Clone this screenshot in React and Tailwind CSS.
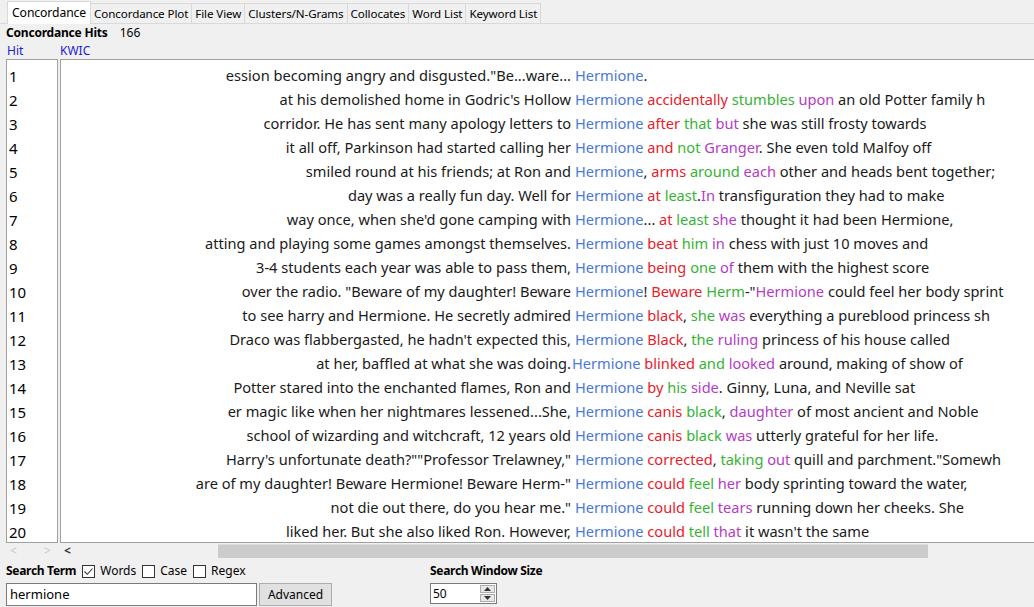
import React from 'react';

const RED = 'text-[#e8202a]';
const GREEN = 'text-[#35b335]';
const PURPLE = 'text-[#b33cc4]';
const BLUE = 'text-[#4a78d6]';

// segments: [text, color] where color is one of k/r/g/p or '' for black
const rows = [
  ['ession becoming angry and disgusted."Be...ware...', [['Hermione', 'k'], ['.', '']]],
  ["at his demolished home in Godric's Hollow", [['Hermione', 'k'], [' '], ['accidentally', 'r'], [' '], ['stumbles', 'g'], [' '], ['upon', 'p'], [' an old Potter family h']]],
  ['corridor. He has sent many apology letters to', [['Hermione', 'k'], [' '], ['after', 'r'], [' '], ['that', 'g'], [' '], ['but', 'p'], [' she was still frosty towards']]],
  ['it all off, Parkinson had started calling her', [['Hermione', 'k'], [' '], ['and', 'r'], [' '], ['not', 'g'], [' '], ['Granger', 'p'], ['. She even told Malfoy off']]],
  ['smiled round at his friends; at Ron and', [['Hermione', 'k'], [', '], ['arms', 'r'], [' '], ['around', 'g'], [' '], ['each', 'p'], [' other and heads bent together;']]],
  ['day was a really fun day. Well for', [['Hermione', 'k'], [' '], ['at', 'r'], [' '], ['least', 'g'], ['.'], ['In', 'p'], [' transfiguration they had to make']]],
  ["way once, when she'd gone camping with", [['Hermione', 'k'], ['... '], ['at', 'r'], [' '], ['least', 'g'], [' '], ['she', 'p'], [' thought it had been Hermione,']]],
  ['atting and playing some games amongst themselves.', [['Hermione', 'k'], [' '], ['beat', 'r'], [' '], ['him', 'g'], [' '], ['in', 'p'], [' chess with just 10 moves and']]],
  ['3-4 students each year was able to pass them,', [['Hermione', 'k'], [' '], ['being', 'r'], [' '], ['one', 'g'], [' '], ['of', 'p'], [' them with the highest score']]],
  ['over the radio. "Beware of my daughter! Beware', [['Hermione', 'k'], ['! '], ['Beware', 'r'], [' '], ['Herm', 'g'], ['-"'], ['Hermione', 'p'], [' could feel her body sprint']]],
  ['to see harry and Hermione. He secretly admired', [['Hermione', 'k'], [' '], ['black', 'r'], [', '], ['she', 'g'], [' '], ['was', 'p'], [' everything a pureblood princess sh']]],
  ["Draco was flabbergasted, he hadn't expected this,", [['Hermione', 'k'], [' '], ['Black', 'r'], [', '], ['the', 'g'], [' '], ['ruling', 'p'], [' princess of his house called']]],
  ['at her, baffled at what she was doing.', [['Hermione', 'k'], [' '], ['blinked', 'r'], [' '], ['and', 'g'], [' '], ['looked', 'p'], [' around, making of show of']], true],
  ['Potter stared into the enchanted flames, Ron and', [['Hermione', 'k'], [' '], ['by', 'r'], [' '], ['his', 'g'], [' '], ['side', 'p'], ['. Ginny, Luna, and Neville sat']]],
  ['er magic like when her nightmares lessened...She,', [['Hermione', 'k'], [' '], ['canis', 'r'], [' '], ['black', 'g'], [', '], ['daughter', 'p'], [' of most ancient and Noble']]],
  ['school of wizarding and witchcraft, 12 years old', [['Hermione', 'k'], [' '], ['canis', 'r'], [' '], ['black', 'g'], [' '], ['was', 'p'], [' utterly grateful for her life.']]],
  ['Harry\'s unfortunate death?""Professor Trelawney,"', [['Hermione', 'k'], [' '], ['corrected', 'r'], [', '], ['taking', 'g'], [' '], ['out', 'p'], [' quill and parchment."Somewh']]],
  ['are of my daughter! Beware Hermione! Beware Herm-"', [['Hermione', 'k'], [' '], ['could', 'r'], [' '], ['feel', 'g'], [' '], ['her', 'p'], [' body sprinting toward the water,']]],
  ['not die out there, do you hear me."', [['Hermione', 'k'], [' '], ['could', 'r'], [' '], ['feel', 'g'], [' '], ['tears', 'p'], [' running down her cheeks. She']]],
  ['liked her. But she also liked Ron. However,', [['Hermione', 'k'], [' '], ['could', 'r'], [' '], ['tell', 'g'], [' '], ['that', 'p'], [" it wasn't the same"]]],
];

const colorFor = { k: BLUE, r: RED, g: GREEN, p: PURPLE };

const tabs = ['Concordance', 'Concordance Plot', 'File View', 'Clusters/N-Grams', 'Collocates', 'Word List', 'Keyword List'];

const Checkbox = ({ checked, label }) => (
  <label className="flex items-center gap-[5px]">
    <span className="flex h-[13px] w-[13px] items-center justify-center border border-[#333] bg-white">
      {checked && (
        <svg width="11" height="11" viewBox="0 0 11 11">
          <path d="M1.5 5.5 L4.3 8.3 L9.5 2.5" fill="none" stroke="#333" strokeWidth="1.1" />
        </svg>
      )}
    </span>
    <span>{label}</span>
  </label>
);

export default function App() {
  return (
    <div className="h-[607px] w-[1034px] overflow-hidden bg-[#f0f0f0] font-['Segoe_UI','Noto_Sans',sans-serif] text-[12px] text-black">
      {/* tab strip */}
      <div className="flex h-6 items-end border-b border-[#d9d9d9] pl-[7px]">
        {tabs.map((t, i) =>
          i === 0 ? (
            <div key={t} className="-mb-px flex h-[23px] items-center border border-b-0 border-[#d9d9d9] bg-white px-[4px] text-[12.2px] tracking-[-0.1px]">
              {t}
            </div>
          ) : (
            <div key={t} className="flex h-[20px] items-center border border-l-0 border-b-0 border-[#d9d9d9] px-[3px] text-[11.6px] tracking-[-0.1px]">
              {t}
            </div>
          )
        )}
      </div>

      <div className="flex h-[18px] items-center gap-3 pl-[6px]">
        <span className="font-bold tracking-[-0.2px]">Concordance Hits</span>
        <span>166</span>
      </div>
      <div className="flex h-[17px] items-center text-[#1c1cd0]">
        <span className="w-[60px] pl-[7px]">Hit</span>
        <span>KWIC</span>
      </div>

      {/* tables */}
      <div className="flex h-[484px] pl-[6px] text-[14.6px]">
        <div className="w-[52px] border border-[#a0a0a0] bg-white pt-[4px] pl-[2px] text-[15px]">
          {rows.map((_, i) => (
            <div key={i} className="flex h-6 items-center">{i + 1}</div>
          ))}
        </div>
        <div className="ml-[2px] flex-1 overflow-hidden border border-r-0 border-[#a0a0a0] bg-white pt-[4px]">
          {rows.map(([left, segs, tight], i) => (
            <div key={i} className="flex h-6 items-center whitespace-nowrap text-[#1a1a1a]">
              <div className="flex w-[510px] shrink-0 justify-end overflow-hidden">
                <span>{left}</span>
              </div>
              <div className={tight ? 'pl-[1px]' : 'pl-[4px]'}>
                {segs.map(([txt, c], j) => (
                  <span key={j} className={c ? colorFor[c] : ''}>{txt}</span>
                ))}
              </div>
            </div>
          ))}
        </div>
      </div>

      {/* horizontal scroll */}
      <div className="flex h-[15px] items-center text-[12px]">
        <div className="flex w-[218px] shrink-0 items-center">
          <span className="ml-[10px] w-[34px] text-[#c8c8c8]">&lt;</span>
          <span className="w-[20px] text-[#c8c8c8]">&gt;</span>
          <span className="font-bold text-[#333]">&lt;</span>
        </div>
        <div className="h-[14px] w-[710px] border-t border-[#dcdcdc] bg-[#cccccc]" />
      </div>

      {/* search */}
      <div className="mt-[1px] flex">
        <div className="flex w-[430px] flex-col pl-[6px]">
          <div className="flex h-[24px] items-center gap-[6px]">
            <span className="font-bold tracking-[-0.3px]">Search Term</span>
            <Checkbox checked label="Words" />
            <Checkbox label="Case" />
            <Checkbox label="Regex" />
          </div>
          <div className="flex h-[23px]">
            <div className="flex w-[251px] items-center border border-[#7a7a7a] bg-white pl-[3px] text-[13px]">hermione</div>
            <div className="ml-[2px] flex w-[73px] items-center justify-center border border-[#adadad] bg-[#e1e1e1]">Advanced</div>
          </div>
        </div>
        <div className="flex flex-col">
          <div className="flex h-[24px] items-center font-bold tracking-[-0.3px]">Search Window Size</div>
          <div className="flex h-[21px] w-[67px] items-center justify-between border border-[#7a7a7a] bg-white pl-[2px] pr-[1px]">
            <span>50</span>
            <div className="flex flex-col gap-[1px]">
              <div className="flex h-[8px] w-[15px] items-center justify-center border border-[#adadad] bg-[#e8e8e8]">
                <svg width="7" height="4" viewBox="0 0 7 4"><path d="M0 4 L3.5 0 L7 4 Z" fill="#333" /></svg>
              </div>
              <div className="flex h-[8px] w-[15px] items-center justify-center border border-[#adadad] bg-[#e8e8e8]">
                <svg width="7" height="4" viewBox="0 0 7 4"><path d="M0 0 L3.5 4 L7 0 Z" fill="#333" /></svg>
              </div>
            </div>
          </div>
        </div>
      </div>
    </div>
  );
}
